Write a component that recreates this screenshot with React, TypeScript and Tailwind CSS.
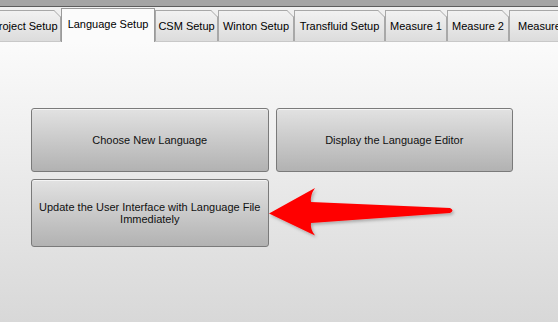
import React from "react";

const tabs = [
  { label: "Project Setup", w: 73, active: false },
  { label: "Language Setup", w: 94, active: true },
  { label: "CSM Setup", w: 63, active: false },
  { label: "Winton Setup", w: 76, active: false },
  { label: "Transfluid Setup", w: 91, active: false },
  { label: "Measure 1", w: 62, active: false },
  { label: "Measure 2", w: 62, active: false },
  { label: "Measure 3", w: 70, active: false },
];

function Tab({ label, w, active }: { label: string; w: number; active: boolean }) {
  if (active) {
    return (
      <div
        className="relative z-10 -mb-px flex h-[34px] shrink-0 items-start justify-center border border-b-0 border-[#9a9a9a] bg-[#fbfbfb] pt-[7px] text-black"
        style={{ width: w }}
      >
        <span>{label}</span>
      </div>
    );
  }
  return (
    <div
      className="relative flex h-[31px] shrink-0 items-start justify-center border border-b-0 border-l-[#a8a8a8] border-r-[#a8a8a8] border-t-[#a8a8a8] bg-gradient-to-b from-[#f2f2f2] to-[#dcdcdc] pt-[7px] text-black"
      style={{ width: w }}
    >
      <span className="whitespace-nowrap">{label}</span>
      <svg className="absolute -right-px -top-px" width="7" height="7" viewBox="0 0 7 7">
        <polygon points="0,0 7,0 7,7" fill="#f0f0f0" />
        <line x1="0" y1="0.5" x2="6.5" y2="7" stroke="#a8a8a8" strokeWidth="1" />
      </svg>
    </div>
  );
}

function Btn({ children, h }: { children: React.ReactNode; h: number }) {
  return (
    <div
      className="flex items-center justify-center whitespace-nowrap rounded-[3px] border border-[#7a7a7a] bg-gradient-to-b from-[#e2e2e2] to-[#b2b2b2] text-center leading-[12px] text-[#111] shadow-[inset_0_1px_0_#f4f4f4]"
      style={{ height: h }}
    >
      <span>{children}</span>
    </div>
  );
}

export default function App() {
  return (
    <div
      className="relative h-[322px] w-[558px] overflow-hidden bg-[#f0f0f0] text-[11px]"
      style={{ fontFamily: '"Liberation Sans", Arial, sans-serif' }}
    >
      <div className="h-[6px] bg-[#a4a4a4]" />
      <div className="h-px bg-[#5c5c5c]" />
      <div className="flex h-[34px] items-end -ml-[12px]">
        {tabs.map((t) => (
          <Tab key={t.label} {...t} />
        ))}
      </div>
      <div className="h-[281px] border-t border-[#c8c8c8] bg-gradient-to-b from-[#fbfbfb] to-[#d8d8d8] pl-[31px] pt-[66px]">
        <div className="grid w-[482px] grid-cols-2 gap-x-[7px] gap-y-[7px]">
          <Btn h={64}>Choose New Language</Btn>
          <Btn h={64}>Display the Language Editor</Btn>
          <Btn h={68}>
            Update the User Interface with Language File
            <br />
            Immediately
          </Btn>
        </div>
      </div>
      <svg className="absolute left-0 top-0" width="558" height="322" viewBox="0 0 558 322">
        <defs>
          <filter id="sh" x="-10%" y="-30%" width="120%" height="160%">
            <feDropShadow dx="1.5" dy="2" stdDeviation="1.5" floodColor="#000" floodOpacity="0.25" />
          </filter>
        </defs>
        <path
          d="M269,213.5 L315,188 Q310,195 311,202 L450,208 Q455,210.5 450,213 L311,223 Q310,229 315,235.5 Z"
          fill="#ff0000"
          filter="url(#sh)"
        />
      </svg>
    </div>
  );
}
